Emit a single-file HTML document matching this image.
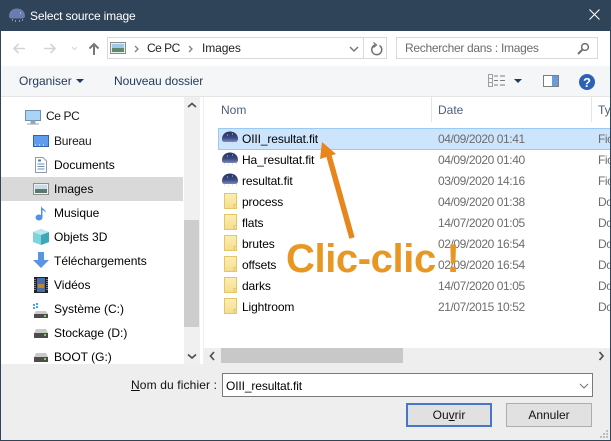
<!DOCTYPE html>
<html><head><meta charset="utf-8">
<style>
html,body{margin:0;padding:0;background:#fff}
#r{position:relative;width:611px;height:441px;overflow:hidden;background:#fff;font-family:"Liberation Sans",sans-serif;font-size:12px;color:#000}
.a{position:absolute}
.t{position:absolute;white-space:nowrap;line-height:16px;height:16px}
svg{position:absolute;overflow:visible}
.d{color:#6d6d6d;letter-spacing:-.42px}
.f{letter-spacing:-.12px}
</style></head><body><div id="r">
<svg width="0" height="0" style="left:0;top:0"><defs><linearGradient id="g" x1="0" y1="0" x2="0" y2="1"><stop offset="0" stop-color="#27325f"/><stop offset=".6" stop-color="#3c4a84"/><stop offset="1" stop-color="#7f8ab8"/></linearGradient><linearGradient id="y" x1="0" y1="0" x2="0" y2="1"><stop offset="0" stop-color="#fbeeb4"/><stop offset="1" stop-color="#f6dd8e"/></linearGradient></defs></svg>
<!-- frame -->
<div class="a" style="left:0;top:0;width:611px;height:31px;background:#2f4459"></div>
<div class="a" style="left:0;top:31px;width:1px;height:410px;background:#2f4459"></div>
<div class="a" style="left:0;top:440px;width:611px;height:1px;background:#2f4459"></div>
<!-- title -->
<svg style="left:9px;top:8px" width="17" height="14"><path d="M0 8C0 3 4 .5 8 .5s8 2.500 8 7.500c0 2-2 2.500-3 2.500H3C1 10.500 0 10 0 8z" fill="#6a7db2"/><path d="M3 12h1M6 13h1M10 13h1M13 12h1M11 5h1" stroke="#e4e8f2"/></svg>
<div class="t" style="left:30px;top:8px;color:#fff;letter-spacing:-.17px">Select source image</div>
<svg style="left:589px;top:9px" width="11" height="11"><path d="M.5.5l10 10M10.500.5l-10 10" stroke="#fff" stroke-width="1.100"/></svg>
<!-- nav -->
<svg style="left:13px;top:41px" width="90" height="16"><path d="M1 7.500h11M5.500 3l-4.500 4.500 4.500 4.500M31 7.500h11M37.500 3l4.500 4.500-4.500 4.500" fill="none" stroke="#d4d4d4" stroke-width="1.600"/><path d="M59 6l2.500 2.500L64 6" fill="none" stroke="#d9d9d9" stroke-width="1.200"/><path d="M81 14V3M76.500 7.500L81 3l4.500 4.500" fill="none" stroke="#767676" stroke-width="2"/></svg>
<div class="a" style="left:107px;top:37px;width:278px;height:20px;border:1px solid #d9d9d9"></div>
<svg style="left:110px;top:42px" width="16" height="12"><rect x=".5" y=".5" width="15" height="11" fill="#e8eef2" stroke="#8a8a8a"/><rect x="2" y="2" width="12" height="4" fill="#9fc9e8"/><rect x="2" y="6" width="12" height="4" fill="#5d8a6a"/></svg>
<svg style="left:134px;top:45px" width="8" height="8"><path d="M1 1l3 3-3 3" fill="none" stroke="#808080" stroke-width="1.300"/></svg>
<div class="t" style="left:147px;top:40px;color:#222;letter-spacing:-.5px">Ce PC</div>
<svg style="left:188px;top:45px" width="8" height="8"><path d="M1 1l3 3-3 3" fill="none" stroke="#808080" stroke-width="1.300"/></svg>
<div class="t" style="left:202px;top:40px;color:#222;letter-spacing:-.1px">Images</div>
<svg style="left:349px;top:46px" width="11" height="7"><path d="M1 1l4 4 4-4" fill="none" stroke="#777" stroke-width="1.500"/></svg>
<div class="a" style="left:363px;top:38px;width:1px;height:20px;background:#d9d9d9"></div>
<svg style="left:369px;top:42px" width="14" height="14"><path d="M10.500 3.500A5 5 0 1 1 6 3" fill="none" stroke="#707070" stroke-width="1.500"/><path d="M4.500 .5l3 2.500-3 2.500" fill="none" stroke="#707070" stroke-width="1.200"/></svg>
<div class="a" style="left:396px;top:37px;width:200px;height:20px;border:1px solid #d9d9d9"></div>
<div class="t" style="left:405px;top:40px;color:#6d6d6d;letter-spacing:-.3px">Rechercher dans : Images</div>
<svg style="left:577px;top:42px" width="13" height="13"><circle cx="8" cy="5" r="3.400" fill="none" stroke="#707070" stroke-width="1.500"/><path d="M5.500 7.500L1 12" stroke="#707070" stroke-width="2"/></svg>
<!-- toolbar -->
<div class="a" style="left:1px;top:66px;width:609px;height:30px;background:#f5f6f7"></div>
<div class="a" style="left:1px;top:96px;width:609px;height:1px;background:#e5e5e5"></div>
<div class="t" style="left:19px;top:73px;color:#1e395b">Organiser</div>
<svg style="left:76px;top:79px" width="8" height="5"><path d="M0 0h8L4 4z" fill="#1e395b"/></svg>
<div class="t" style="left:114px;top:73px;color:#1e395b;letter-spacing:-.06px">Nouveau dossier</div>
<svg style="left:488px;top:74px" width="17" height="13"><path d="M0.500 .5h4v12h-4zM.5 4.500h4M.5 8.500h4" fill="none" stroke="#a0a0a0"/><path d="M6 2h4M12 2h5M6 6.500h4M12 6.500h5M6 11h4M12 11h5" stroke="#7c7c7c"/></svg>
<svg style="left:514px;top:79px" width="8" height="5"><path d="M0 0h8L4 4z" fill="#1e395b"/></svg>
<svg style="left:543px;top:75px" width="16" height="12"><rect x=".5" y=".5" width="15" height="11" fill="#fff" stroke="#7d7d7d"/><rect x="9" y="1" width="6" height="10" fill="#6b9bdc"/></svg>
<svg style="left:579px;top:74px" width="16" height="16"><circle cx="8" cy="8" r="8" fill="#2c62b5"/><text x="8" y="13" text-anchor="middle" font-family="Liberation Sans" font-weight="bold" font-size="13" fill="#fff">?</text></svg>
<!-- sidebar -->
<div class="a" style="left:1px;top:177px;width:182px;height:24px;background:#d9d9d9"></div>
<div class="a" style="left:184px;top:97px;width:16px;height:267px;background:#f0f0f0"></div>
<div class="a" style="left:184px;top:220px;width:15px;height:107px;background:#cdcdcd"></div>
<svg style="left:187px;top:102px" width="10" height="7"><path d="M1 5l4-3.500L9 5" fill="none" stroke="#505050" stroke-width="1.700"/></svg>
<svg style="left:187px;top:353px" width="10" height="7"><path d="M1 1.500L5 5l4-3.500" fill="none" stroke="#505050" stroke-width="1.700"/></svg>
<!-- sidebar icons -->
<svg style="left:25px;top:110px" width="16" height="15"><rect x=".5" y=".5" width="15" height="10" fill="#a8d4f8" stroke="#6f8fb0"/><path d="M6 11h4v2H6zM2 14h12" fill="#9aa5b0" stroke="#9aa5b0"/></svg>
<svg style="left:33px;top:135px" width="16" height="12"><rect x=".5" y=".5" width="15" height="11" fill="#5f9cef" stroke="#2e63b0"/><path d="M2 10h12" stroke="#fff" stroke-dasharray="1 3"/></svg>
<svg style="left:35px;top:157px" width="12" height="16"><path d="M.5.500h7.500l3.500 3.500v11.500h-11z" fill="#fff" stroke="#8f9aa5"/><path d="M2.500 7h7M2.500 9.500h7M2.500 12h7" stroke="#6a8fb5"/><path d="M3 2.500h3v2H3z" fill="#4a80c0"/></svg>
<svg style="left:33px;top:183px" width="16" height="12"><rect x=".5" y=".5" width="15" height="11" fill="#eef1f2" stroke="#8f8f8f"/><rect x="2" y="2" width="12" height="4" fill="#c3dcec"/><rect x="2" y="6" width="12" height="4" fill="#5d7a68"/></svg>
<svg style="left:35px;top:205px" width="12" height="16"><ellipse cx="4" cy="12.500" rx="3.500" ry="3" fill="#4f94ea"/><path d="M6 12V1c1 3 5 3 4.500 7C9.500 6 8.500 5.500 7.500 5V12z" fill="#4f94ea"/></svg>
<svg style="left:33px;top:229px" width="16" height="16"><path d="M8 0l8 3v10l-8 3-8-3V3z" fill="#7fd3dd"/><path d="M8 6v10l8-3V3z" fill="#3ba7b8"/><path d="M0 3l8 3 8-3-8-3z" fill="#b7e8ee"/></svg>
<svg style="left:33px;top:252px" width="16" height="17"><path d="M5 0h6v8h5l-8 8-8-8h5z" fill="#5a94e4"/></svg>
<svg style="left:34px;top:277px" width="14" height="16"><rect width="14" height="16" fill="#222"/><rect x="3" y="1" width="8" height="14" fill="#4a6cb0"/><rect x="4" y="7" width="6" height="4" fill="#b88a2e"/><path d="M1 2v12M13 2v12" stroke="#ddd" stroke-dasharray="1 1"/></svg>
<svg style="left:33px;top:303px" width="16" height="15"><path d="M0 1h2v2H0zM3 0h2v2H3zM0 4h2v2H0zM3 3h2v2H3z" fill="#4aa4ec"/><path d="M3 8h10l2 3H1z" fill="#c9c9c9"/><rect x="1" y="11" width="14" height="4" fill="#4d4d4d"/><rect x="11" y="12" width="2" height="2" fill="#7dd04a"/></svg>
<svg style="left:33px;top:328px" width="16" height="12"><path d="M3 1h10l2 4H1z" fill="#c9c9c9"/><rect x="1" y="5" width="14" height="5" fill="#4d4d4d"/><rect x="11" y="6" width="2" height="2" fill="#7dd04a"/></svg>
<svg style="left:33px;top:352px" width="16" height="12"><path d="M3 1h10l2 4H1z" fill="#c9c9c9"/><rect x="1" y="5" width="14" height="5" fill="#4d4d4d"/><rect x="11" y="6" width="2" height="2" fill="#7dd04a"/></svg>
<!-- sidebar labels -->
<div class="t" style="left:46px;top:108px;color:#1a1a1a;letter-spacing:-.4px">Ce PC</div>
<div class="t" style="left:54px;top:133px;color:#1a1a1a;letter-spacing:-.2px">Bureau</div>
<div class="t" style="left:54px;top:157px">Documents</div>
<div class="t" style="left:54px;top:181px">Images</div>
<div class="t" style="left:54px;top:205px">Musique</div>
<div class="t" style="left:54px;top:229px">Objets 3D</div>
<div class="t" style="left:54px;top:253px">Téléchargements</div>
<div class="t" style="left:54px;top:277px">Vidéos</div>
<div class="t" style="left:54px;top:301px">Système (C:)</div>
<div class="t" style="left:54px;top:325px">Stockage (D:)</div>
<div class="t" style="left:54px;top:349px">BOOT (G:)</div>
<!-- list header -->
<div class="t" style="left:221px;top:102px;color:#4c607a">Nom</div>
<div class="t" style="left:438px;top:102px;color:#4c607a">Date</div>
<div class="t" style="left:598px;top:102px;color:#4c607a">Type</div>
<div class="a" style="left:431px;top:97px;width:1px;height:25px;background:#e5e5e5"></div>
<div class="a" style="left:591px;top:97px;width:1px;height:25px;background:#e5e5e5"></div>
<div class="a" style="left:203px;top:97px;width:1px;height:267px;background:#f0f0f0"></div>
<!-- selection -->
<div class="a" style="left:218px;top:128px;width:391px;height:20px;background:#cce4fc;border:1px solid #99c9f6;border-right:0"></div>
<!-- file icons -->
<svg style="left:222px;top:131px" width="16" height="13"><path d="M0 8C0 3 4 .5 8 .5s8 2.500 8 7.500c0 2.500-2 3-3 3H3C1 11 0 10.500 0 8z" fill="url(#g)"/><path d="M5 4h1M10 3h1M2 12h1M6 13h1M10 12h1M14 12h1" stroke="#c8cfe2"/></svg>
<svg style="left:222px;top:152px" width="16" height="13"><path d="M0 8C0 3 4 .5 8 .5s8 2.500 8 7.500c0 2.500-2 3-3 3H3C1 11 0 10.500 0 8z" fill="url(#g)"/><path d="M5 4h1M10 3h1M2 12h1M6 13h1M10 12h1M14 12h1" stroke="#c8cfe2"/></svg>
<svg style="left:222px;top:173px" width="16" height="13"><path d="M0 8C0 3 4 .5 8 .5s8 2.500 8 7.500c0 2.500-2 3-3 3H3C1 11 0 10.500 0 8z" fill="url(#g)"/><path d="M5 4h1M10 3h1M2 12h1M6 13h1M10 12h1M14 12h1" stroke="#c8cfe2"/></svg>
<svg style="left:224px;top:193px" width="13" height="16"><rect x=".5" y=".5" width="12" height="15" fill="url(#y)" stroke="#e2c762"/><path d="M10 15.500v-4h2.500" fill="none" stroke="#e2c762"/></svg>
<svg style="left:224px;top:214px" width="13" height="16"><rect x=".5" y=".5" width="12" height="15" fill="url(#y)" stroke="#e2c762"/><path d="M10 15.500v-4h2.500" fill="none" stroke="#e2c762"/></svg>
<svg style="left:224px;top:235px" width="13" height="16"><rect x=".5" y=".5" width="12" height="15" fill="url(#y)" stroke="#e2c762"/><path d="M10 15.500v-4h2.500" fill="none" stroke="#e2c762"/></svg>
<svg style="left:224px;top:256px" width="13" height="16"><rect x=".5" y=".5" width="12" height="15" fill="url(#y)" stroke="#e2c762"/><path d="M10 15.500v-4h2.500" fill="none" stroke="#e2c762"/></svg>
<svg style="left:224px;top:277px" width="13" height="16"><rect x=".5" y=".5" width="12" height="15" fill="url(#y)" stroke="#e2c762"/><path d="M10 15.500v-4h2.500" fill="none" stroke="#e2c762"/></svg>
<svg style="left:224px;top:298px" width="13" height="16"><rect x=".5" y=".5" width="12" height="15" fill="url(#y)" stroke="#e2c762"/><path d="M10 15.500v-4h2.500" fill="none" stroke="#e2c762"/></svg>
<!-- file names -->
<div class="t f" style="left:242px;top:131px">OIII_resultat.fit</div>
<div class="t f" style="left:242px;top:152px">Ha_resultat.fit</div>
<div class="t f" style="left:242px;top:173px">resultat.fit</div>
<div class="t f" style="left:242px;top:194px">process</div>
<div class="t f" style="left:242px;top:215px">flats</div>
<div class="t f" style="left:242px;top:236px">brutes</div>
<div class="t f" style="left:242px;top:257px">offsets</div>
<div class="t f" style="left:242px;top:278px">darks</div>
<div class="t f" style="left:242px;top:299px">Lightroom</div>
<!-- dates -->
<div class="t d" style="left:438px;top:131px">04/09/2020 01:41</div>
<div class="t d" style="left:438px;top:152px">04/09/2020 01:40</div>
<div class="t d" style="left:438px;top:173px">03/09/2020 14:16</div>
<div class="t d" style="left:438px;top:194px">04/09/2020 01:38</div>
<div class="t d" style="left:438px;top:215px">14/07/2020 01:05</div>
<div class="t d" style="left:438px;top:236px">02/09/2020 16:54</div>
<div class="t d" style="left:438px;top:257px">02/09/2020 16:54</div>
<div class="t d" style="left:438px;top:278px">14/07/2020 01:05</div>
<div class="t d" style="left:438px;top:299px">21/07/2015 10:52</div>
<!-- type col -->
<div class="t d" style="left:598px;top:131px">Fichier</div>
<div class="t d" style="left:598px;top:152px">Fichier</div>
<div class="t d" style="left:598px;top:173px">Fichier</div>
<div class="t d" style="left:598px;top:194px">Dossier</div>
<div class="t d" style="left:598px;top:215px">Dossier</div>
<div class="t d" style="left:598px;top:236px">Dossier</div>
<div class="t d" style="left:598px;top:257px">Dossier</div>
<div class="t d" style="left:598px;top:278px">Dossier</div>
<div class="t d" style="left:598px;top:299px">Dossier</div>
<div class="a" style="left:610px;top:31px;width:1px;height:410px;background:#2f4459"></div>
<!-- arrow and annotation -->
<svg style="left:0;top:0" width="611" height="441"><path d="M352 238L329 156" stroke="#e8851c" stroke-width="5.500" fill="none"/><path d="M322 142L336 154 320 159z" fill="#e8851c"/></svg>
<div class="t" style="left:286px;top:237px;height:44px;line-height:44px;font-size:40px;font-weight:bold;color:#e89723;letter-spacing:-.4px">Clic-clic !</div>
<!-- h scroll -->
<div class="a" style="left:204px;top:348px;width:406px;height:16px;background:#eeeeee"></div>
<div class="a" style="left:221px;top:348px;width:182px;height:15px;background:#c8c8c8"></div>
<svg style="left:209px;top:351px" width="7" height="10"><path d="M5 1L1.500 5 5 9" fill="none" stroke="#505050" stroke-width="1.700"/></svg>
<svg style="left:598px;top:351px" width="7" height="10"><path d="M1.500 1L5 5 1.500 9" fill="none" stroke="#505050" stroke-width="1.700"/></svg>
<!-- bottom -->
<div class="a" style="left:1px;top:364px;width:609px;height:76px;background:#eeeeee"></div>
<div class="t" style="left:131px;top:377px;color:#111;letter-spacing:.13px"><span style="text-decoration:underline">N</span>om du fichier :</div>
<div class="a" style="left:222px;top:373px;width:369px;height:22px;background:#fff;border:1px solid #7a7a7a"></div>
<div class="t f" style="left:226px;top:378px">OIII_resultat.fit</div>
<svg style="left:579px;top:383px" width="11" height="6"><path d="M1 1l4 4 4-4" fill="none" stroke="#777" stroke-width="1.100"/></svg>
<div class="a" style="left:406px;top:403px;width:82px;height:20px;background:#e1e1e1;border:2px solid #4677c8"></div>
<div class="t" style="left:406px;top:407px;width:86px;text-align:center;color:#111">Ou<span style="text-decoration:underline">v</span>rir</div>
<div class="a" style="left:506px;top:403px;width:84px;height:22px;background:#e1e1e1;border:1px solid #adadad"></div>
<div class="t" style="left:506px;top:407px;width:86px;text-align:center;color:#111">Annuler</div>
<svg style="left:600px;top:429px" width="9" height="9"><path d="M6 1h2v2H6zM3 4h2v2H3zM6 4h2v2H6zM0 7h2v2H0zM3 7h2v2H3zM6 7h2v2H6z" fill="#bcbcbc"/></svg>
</div></body></html>
